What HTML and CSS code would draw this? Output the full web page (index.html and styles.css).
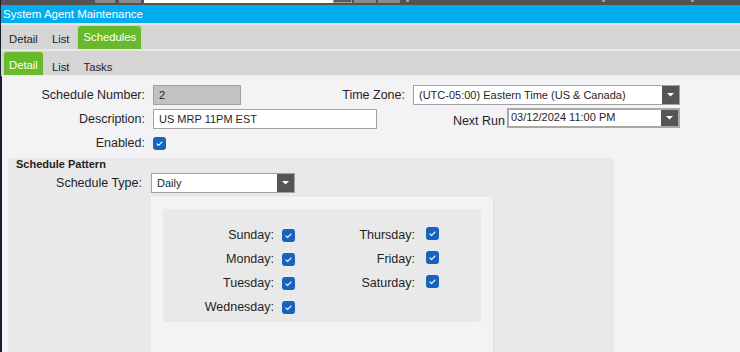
FILE: index.html
```html
<!DOCTYPE html>
<html lang="en">
<head>
    <meta charset="UTF-8">
    <meta name="viewport" content="width=device-width, initial-scale=1.0">
    <title>System Agent Maintenance</title>
    <link rel="stylesheet" href="styles.css">
</head>
<body>
  <div class="window">
    <!-- remains of the toolbar above the form -->
    <div class="toolstrip">
      <span class="tool t1"></span>
      <span class="tool t2"></span>
      <span class="search"></span>
      <span class="search-btn"></span>
      <span class="tool t3"></span>
      <span class="tool t4"></span>
      <span class="mark m1"></span>
      <span class="mark m2"></span>
      <span class="mark m3"></span>
    </div>

    <div class="titlebar">System Agent Maintenance</div>

    <div class="tabbar">
      <span class="tab">Detail</span>
      <span class="tab">List</span>
      <span class="tab active">Schedules</span>
    </div>
    <div class="tabbar sub">
      <span class="tab active">Detail</span>
      <span class="tab">List</span>
      <span class="tab">Tasks</span>
    </div>

    <div class="content">
      <div class="row">
        <label class="lbl w-main">Schedule Number:</label>
        <div class="field readonly w-num">2</div>
        <label class="lbl w-tz">Time Zone:</label>
        <div class="field select w-tzsel">
          <span class="val">(UTC-05:00) Eastern Time (US &amp; Canada)</span>
          <span class="drop"><svg width="7" height="4" viewBox="0 0 7 4"><polygon points="0,0 7,0 3.5,3.5" fill="#fff"/></svg></span>
        </div>
      </div>

      <div class="row">
        <label class="lbl w-main">Description:</label>
        <div class="field w-desc">US MRP 11PM EST</div>
        <label class="lbl w-next">Next Run</label>
        <div class="field select thick w-nextsel">
          <span class="val">03/12/2024 11:00 PM</span>
          <span class="drop"><svg width="7" height="4" viewBox="0 0 7 4"><polygon points="0,0 7,0 3.5,3.5" fill="#fff"/></svg></span>
        </div>
      </div>

      <div class="row">
        <label class="lbl w-main">Enabled:</label>
        <span class="check"><svg width="13" height="13" viewBox="0 0 13 13"><rect width="13" height="13" rx="3" fill="#1565c0"/><path d="M3.6 6.6 L5.6 8.5 L9.4 4.6" fill="none" stroke="#fff" stroke-width="1.1"/></svg></span>
      </div>

      <!-- schedule pattern -->
      <div class="pattern">
        <div class="pattern-title">Schedule Pattern</div>
        <div class="row type-row">
          <label class="lbl w-type">Schedule Type:</label>
          <div class="field select w-typesel">
            <span class="val">Daily</span>
            <span class="drop"><svg width="7" height="4" viewBox="0 0 7 4"><polygon points="0,0 7,0 3.5,3.5" fill="#fff"/></svg></span>
          </div>
        </div>

        <div class="daily">
          <div class="days">
            <div class="day-row">
              <label class="day-lbl left">Sunday:</label>
              <span class="check"><svg width="13" height="13" viewBox="0 0 13 13"><rect width="13" height="13" rx="3" fill="#1565c0"/><path d="M3.6 6.6 L5.6 8.5 L9.4 4.6" fill="none" stroke="#fff" stroke-width="1.1"/></svg></span>
              <label class="day-lbl right">Thursday:</label>
              <span class="check up"><svg width="13" height="13" viewBox="0 0 13 13"><rect width="13" height="13" rx="3" fill="#1565c0"/><path d="M3.6 6.6 L5.6 8.5 L9.4 4.6" fill="none" stroke="#fff" stroke-width="1.1"/></svg></span>
            </div>
            <div class="day-row">
              <label class="day-lbl left">Monday:</label>
              <span class="check"><svg width="13" height="13" viewBox="0 0 13 13"><rect width="13" height="13" rx="3" fill="#1565c0"/><path d="M3.6 6.6 L5.6 8.5 L9.4 4.6" fill="none" stroke="#fff" stroke-width="1.1"/></svg></span>
              <label class="day-lbl right">Friday:</label>
              <span class="check up"><svg width="13" height="13" viewBox="0 0 13 13"><rect width="13" height="13" rx="3" fill="#1565c0"/><path d="M3.6 6.6 L5.6 8.5 L9.4 4.6" fill="none" stroke="#fff" stroke-width="1.1"/></svg></span>
            </div>
            <div class="day-row">
              <label class="day-lbl left">Tuesday:</label>
              <span class="check"><svg width="13" height="13" viewBox="0 0 13 13"><rect width="13" height="13" rx="3" fill="#1565c0"/><path d="M3.6 6.6 L5.6 8.5 L9.4 4.6" fill="none" stroke="#fff" stroke-width="1.1"/></svg></span>
              <label class="day-lbl right">Saturday:</label>
              <span class="check up"><svg width="13" height="13" viewBox="0 0 13 13"><rect width="13" height="13" rx="3" fill="#1565c0"/><path d="M3.6 6.6 L5.6 8.5 L9.4 4.6" fill="none" stroke="#fff" stroke-width="1.1"/></svg></span>
            </div>
            <div class="day-row">
              <label class="day-lbl left">Wednesday:</label>
              <span class="check"><svg width="13" height="13" viewBox="0 0 13 13"><rect width="13" height="13" rx="3" fill="#1565c0"/><path d="M3.6 6.6 L5.6 8.5 L9.4 4.6" fill="none" stroke="#fff" stroke-width="1.1"/></svg></span>
            </div>
          </div>
        </div>
      </div>
    </div>
  </div>
</body>
</html>
```

FILE: styles.css
```css
/* base */
body {
    margin: 0;
    padding: 0;
    font-family: "Liberation Sans", Arial, sans-serif;
    color: #1f1f1f;
    background: #f3f3f5;
    overflow: hidden;
}

.window {
    height: 352px;
    overflow: hidden;
    border-left: 1px solid #14202e;
    background: #f3f3f5;
}

/* toolbar strip */
.toolstrip {
    height: 5px;
    background: #555351;
    display: flex;
    align-items: flex-start;
}

.tool {
    height: 3px;
    background: #8a8a8a;
}
.t1 { width: 20px; margin-left: 94px; }
.t2 { width: 22px; margin-left: 4px; }
.t3 { width: 22px; margin-left: 2px; }
.t4 { width: 22px; margin-left: 2px; }

.search {
    width: 189px;
    height: 3px;
    margin-left: 3px;
    background: #fff;
}

.search-btn {
    width: 17px;
    height: 2px;
    background: #5e5c5a;
    border: 1px solid #9a9a9a;
    border-top: 0;
}

.mark {
    width: 3px;
    height: 2px;
    background: #9d9d9d;
}
.m1 { margin-left: 6px; }
.m2 { margin-left: 193px; }
.m3 { margin-left: 86px; }

/* title */
.titlebar {
    height: 18px;
    line-height: 18px;
    padding-left: 2px;
    background: #00aeef;
    color: #fff;
    font-size: 11.5px;
}

/* tabs */
.tabbar {
    height: 24px;
    border-top: 2px solid #e7e7e7;
    background: #d5d5d5;
    padding-left: 2px;
    display: flex;
    gap: 2px;
}

.tab {
    box-sizing: border-box;
    height: 24px;
    padding: 4px 6px 0;
    line-height: 20px;
    font-size: 11.3px;
    color: #1f1f1f;
}

.tab.active {
    padding: 1px 5px 0;
    color: #fff;
    background: #69ba2b;
    border: 1px solid #bfe59c;
    border-bottom: 0;
    border-radius: 4px 4px 0 0;
}

.tabbar.sub .tab {
    padding-top: 6px;
}

.tabbar.sub .tab.active {
    padding-top: 3px;
}

/* form */
.content {
    border-left: 1px solid #14202e;
    border-top: 2px solid #efeff1;
    padding-top: 8px;
    height: 267px;
}

.row {
    display: flex;
    align-items: center;
    height: 20px;
    margin-bottom: 4px;
}

.lbl {
    font-size: 12.5px;
    text-align: right;
    flex-shrink: 0;
}

.w-main { width: 143px; margin-right: 8px; }
.w-tz { width: 164px; margin-right: 8px; }
.w-next { width: 128px; margin-right: 2px; padding-top: 3px; }
.w-type { width: 134px; margin-right: 9px; }

.field {
    box-sizing: border-box;
    height: 20px;
    border: 1px solid #a2a2a2;
    background: #fff;
    padding-left: 5px;
    font-size: 11px;
    line-height: 18px;
    display: flex;
    align-items: center;
}

.field.readonly {
    background: #c2c2c2;
}

.field.thick {
    border: 2px solid #a8a8a8;
    padding-left: 2px;
    margin-top: -2px;
    align-items: flex-start;
    line-height: 14px;
}

.val {
    flex: 1;
    white-space: nowrap;
}

.drop {
    width: 17px;
    align-self: stretch;
    background: #575553;
    display: flex;
    align-items: center;
    justify-content: center;
}

.w-num { width: 88px; }
.w-tzsel { width: 267px; }
.w-desc { width: 224px; }
.w-nextsel { width: 173px; }
.w-typesel { width: 144px; }

.check {
    width: 13px;
    height: 13px;
    display: inline-flex;
    flex-shrink: 0;
}

/* schedule pattern panel */
.pattern {
    margin: 5px 0 0 6px;
    width: 606px;
    height: 200px;
    background: #e9e9e9;
    border-radius: 4px 4px 0 0;
}

.pattern-title {
    padding-left: 8px;
    font-size: 11px;
    font-weight: bold;
    line-height: 13px;
}

.type-row {
    margin-top: 2px;
    margin-bottom: 0;
}

.daily {
    box-sizing: border-box;
    width: 343px;
    height: 170px;
    margin: 4px 0 0 143px;
    padding: 11px 12px 0 11px;
    background: #f3f3f5;
    border: 1px solid #f6f6f8;
    border-right-color: #dedede;
}

.days {
    height: 113px;
    box-sizing: border-box;
    padding-top: 14px;
    background: #e9e9e9;
    border-radius: 4px;
}

.day-row {
    display: flex;
    align-items: center;
    height: 24px;
}

.day-lbl {
    font-size: 12.5px;
    text-align: right;
}

.day-lbl.left { width: 111px; margin-right: 8px; }
.day-lbl.right { width: 120px; margin-right: 11px; }

.check.up {
    margin-bottom: 4px;
}
```
